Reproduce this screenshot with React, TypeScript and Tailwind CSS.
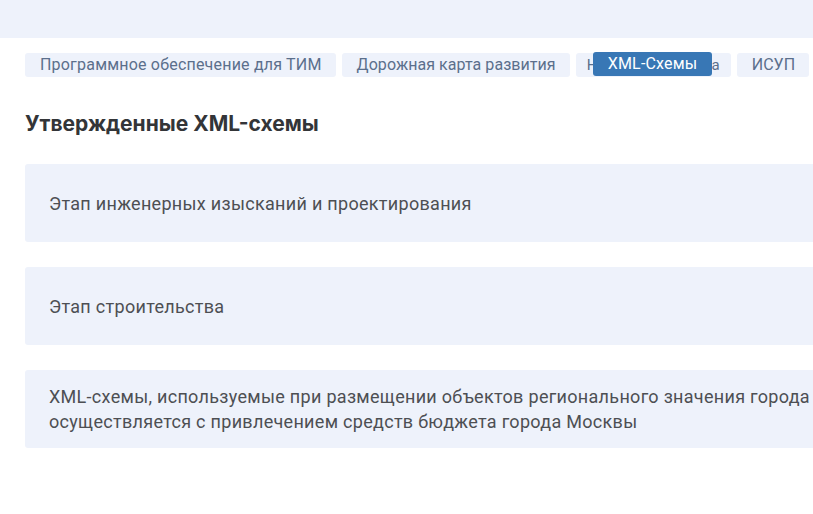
import React from "react";

const tabs = [
  "Программное обеспечение для ТИМ",
  "Дорожная карта развития",
  "Нормативная база",
  "ИСУП",
];

const cards = [
  ["Этап инженерных изысканий и проектирования"],
  ["Этап строительства"],
  [
    "XML-схемы, используемые при размещении объектов регионального значения города Москвы, строительство которых",
    "осуществляется с привлечением средств бюджета города Москвы",
  ],
];

export default function App() {
  return (
    <div
      className="w-[813px] h-[514px] overflow-hidden bg-white"
      style={{ fontFamily: "Roboto, 'Noto Sans', sans-serif" }}
    >
      <div className="h-[38px] bg-[#eef2fb]" />
      <div className="flex gap-[6px] pl-[25px] pt-[15px] whitespace-nowrap">
        {tabs.map((t, i) => (
          <div
            key={t}
            className={`relative h-[24px] flex items-center rounded-[3px] bg-[#eef2fb] text-[16px] text-[#5b6f8c] ${
              i === 2 ? "w-[155px] justify-center" : "pl-[15px] pr-[14px]"
            } ${i === 0 ? "tracking-[0.2px]" : "tracking-[0.05px]"}`}
          >
            <span className={i === 2 ? "text-[15px]" : ""}>{t}</span>
            {i === 2 && (
              <div className="absolute left-[17px] top-[-1px] h-[24px] px-[15px] flex items-center rounded-[3px] bg-[#3877b5] text-white text-[16px] tracking-[0.2px]">
                XML-Схемы
              </div>
            )}
          </div>
        ))}
      </div>
      <h1
        className="pl-[25px] mt-[33px] text-[21px] font-bold text-[#333538] leading-[28px]"
        style={{ fontFamily: "Inter, Roboto, sans-serif" }}
      >
        Утвержденные XML-схемы
      </h1>
      <div className="flex flex-col gap-[25px] pl-[25px] mt-[26px]">
        {cards.map((c, i) => (
          <div
            key={i}
            className="h-[78px] bg-[#eef2fb] rounded-l-[3px] pl-[24px] flex flex-col justify-center whitespace-nowrap text-[18px] tracking-[0.3px] text-[#4d4f53] leading-[25px]"
          >
            {c.map((l) => (
              <div key={l}>{l}</div>
            ))}
          </div>
        ))}
      </div>
    </div>
  );
}
